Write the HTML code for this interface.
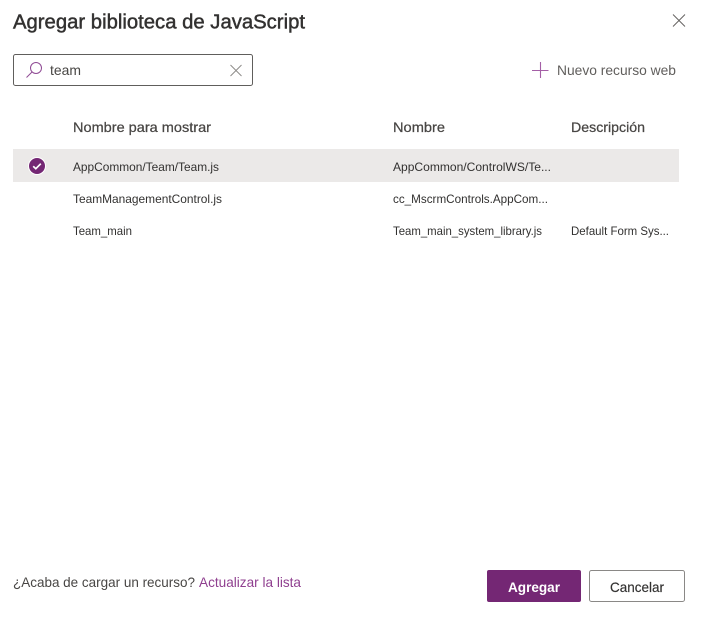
<!DOCTYPE html>
<html lang="es">
<head>
<meta charset="utf-8">
<title>Agregar biblioteca de JavaScript</title>
<style>
html,body{margin:0;padding:0;background:#fff;width:705px;height:617px;overflow:hidden}
svg{display:block;position:absolute;left:0;top:0}
text{font-family:"Liberation Sans",sans-serif}
.c{font-size:12px;fill:#323130}
.h{font-size:14px;fill:#484644;stroke:#484644;stroke-width:.25}
</style>
</head>
<body>
<svg width="705" height="617" viewBox="0 0 705 617" xmlns="http://www.w3.org/2000/svg">
<text x="13" y="28.500" font-size="20" fill="#323130" stroke="#323130" stroke-width=".45" textLength="292" lengthAdjust="spacingAndGlyphs">Agregar biblioteca de JavaScript</text>
<path d="M673 14.500l12 12M685 14.500l-12 12" stroke="#605e5c" stroke-width=".9" fill="none"/>

<rect x="13.500" y="54.500" width="239" height="31" rx="2" fill="#fff" stroke="#605e5c"/>
<circle cx="36" cy="68" r="5.500" fill="none" stroke="#8f4a94" stroke-width="1"/>
<path d="M32 72L26.500 77.500" stroke="#8f4a94" stroke-width="1" fill="none"/>
<text x="50" y="75" font-size="14" fill="#484644" textLength="31" lengthAdjust="spacingAndGlyphs">team</text>
<path d="M230.500 65l11 11M241.500 65l-11 11" stroke="#8a8886" stroke-width=".9" fill="none"/>

<path d="M532 70.500h16.500M540.500 62v16" stroke="#a45fa6" stroke-width="1.100" fill="none"/>
<text x="557" y="75" font-size="14" fill="#605e5c" textLength="119" lengthAdjust="spacingAndGlyphs">Nuevo recurso web</text>

<text class="h" x="73" y="132" textLength="138" lengthAdjust="spacingAndGlyphs">Nombre para mostrar</text>
<text class="h" x="393" y="132" textLength="52" lengthAdjust="spacingAndGlyphs">Nombre</text>
<text class="h" x="571" y="132" textLength="74" lengthAdjust="spacingAndGlyphs">Descripción</text>

<rect x="13" y="149" width="666" height="33" fill="#ebe9e8"/>
<circle cx="37" cy="166" r="9" fill="#fff"/>
<circle cx="37" cy="166" r="8" fill="#742774"/>
<path d="M33.200 166.200l2.600 2.500 5-5" stroke="#fff" stroke-width="1.700" fill="none"/>

<text class="c" x="73" y="171" textLength="146" lengthAdjust="spacingAndGlyphs">AppCommon/Team/Team.js</text>
<text class="c" x="393" y="171" textLength="158" lengthAdjust="spacingAndGlyphs">AppCommon/ControlWS/Te...</text>

<text class="c" x="73" y="203" textLength="149" lengthAdjust="spacingAndGlyphs">TeamManagementControl.js</text>
<text class="c" x="393" y="203" textLength="155" lengthAdjust="spacingAndGlyphs">cc_MscrmControls.AppCom...</text>

<text class="c" x="73" y="235" textLength="59" lengthAdjust="spacingAndGlyphs">Team_main</text>
<text class="c" x="393" y="235" textLength="149" lengthAdjust="spacingAndGlyphs">Team_main_system_library.js</text>
<text class="c" x="571" y="235" textLength="98" lengthAdjust="spacingAndGlyphs">Default Form Sys...</text>

<text x="13" y="587" font-size="14" fill="#484644" textLength="182" lengthAdjust="spacingAndGlyphs">¿Acaba de cargar un recurso?</text>
<text x="199" y="587" font-size="14" fill="#8f3f8f" textLength="102" lengthAdjust="spacingAndGlyphs">Actualizar la lista</text>

<rect x="487" y="570" width="94" height="32" rx="2" fill="#742774"/>
<text x="508" y="592" font-size="14" font-weight="700" fill="#fff" textLength="52" lengthAdjust="spacingAndGlyphs">Agregar</text>
<rect x="589.500" y="570.500" width="95" height="31" rx="2" fill="#fff" stroke="#8a8886"/>
<text x="610" y="592" font-size="14" fill="#323130" stroke="#323130" stroke-width=".15" textLength="54" lengthAdjust="spacingAndGlyphs">Cancelar</text>
</svg>
</body>
</html>
